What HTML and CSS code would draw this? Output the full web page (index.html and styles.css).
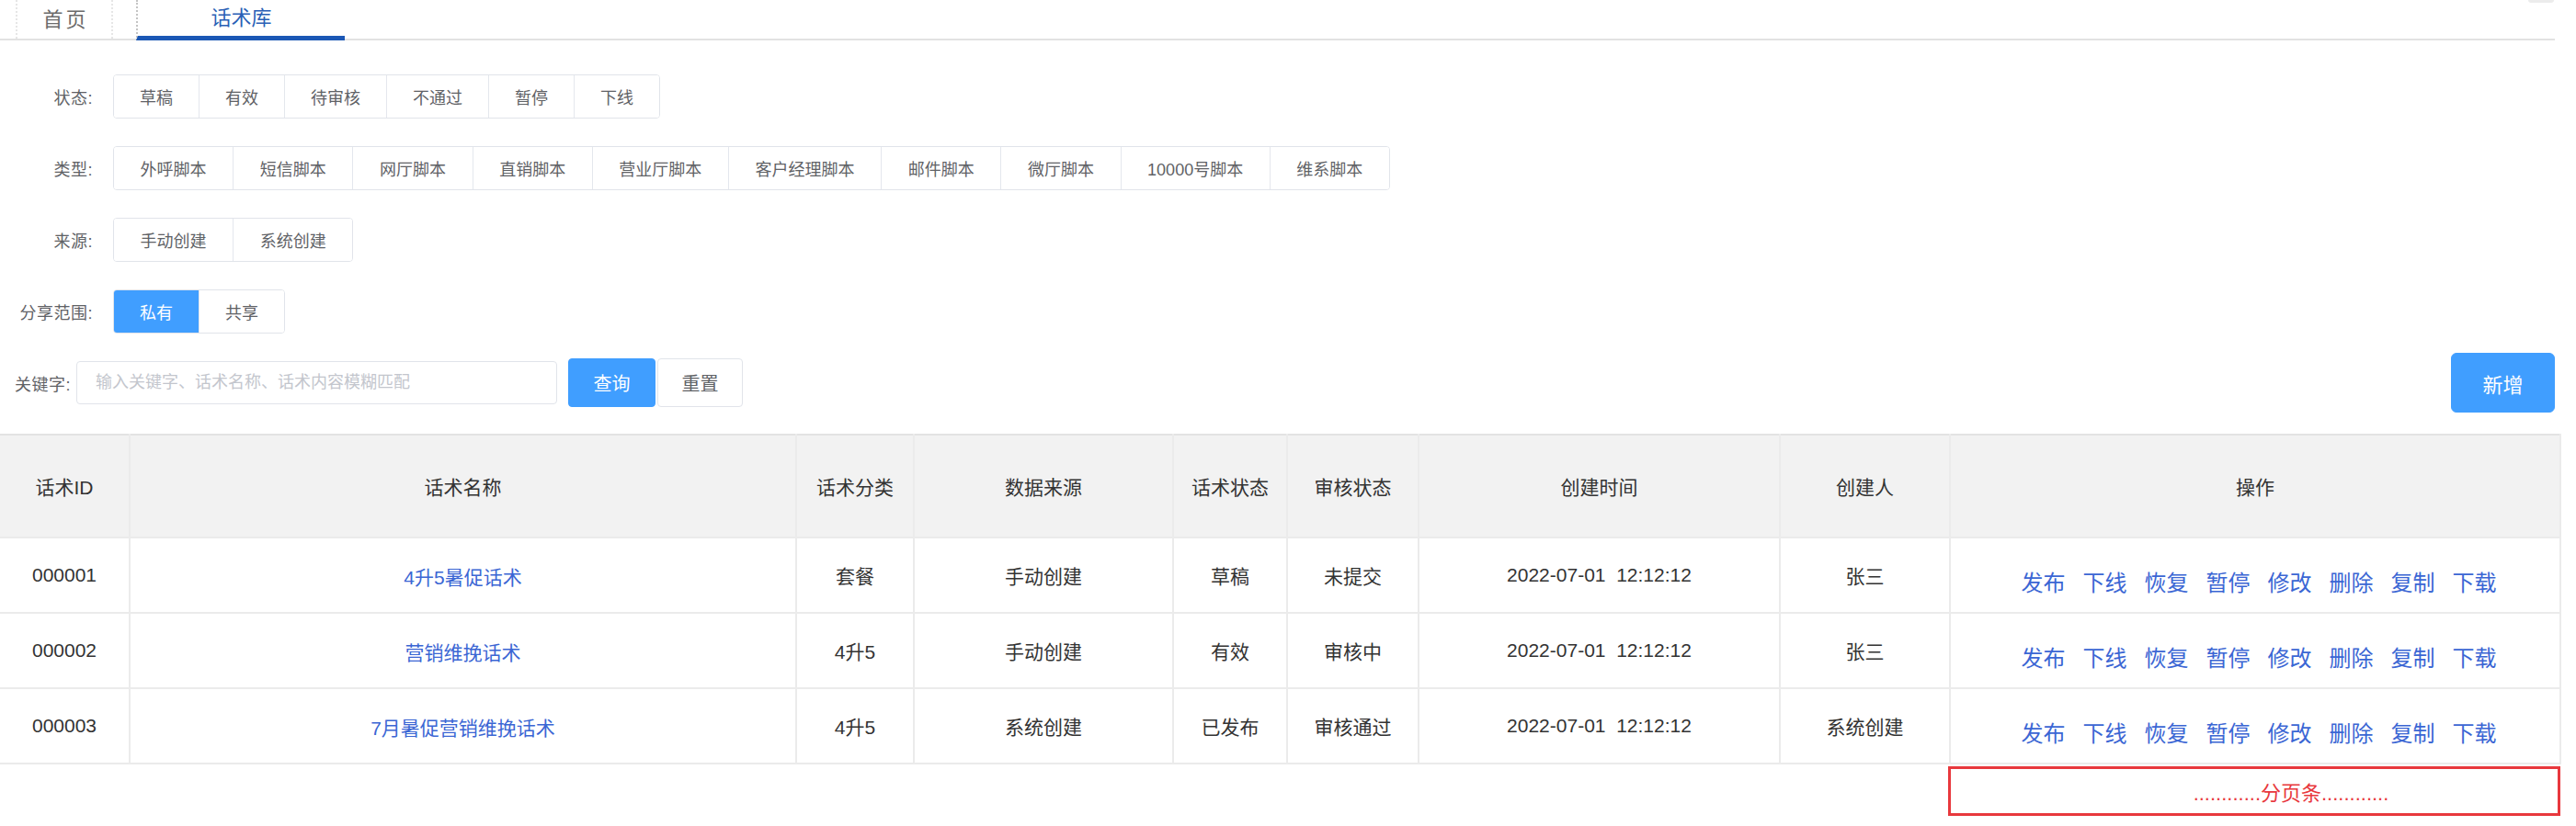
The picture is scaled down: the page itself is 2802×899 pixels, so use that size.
FILE: index.html
```html
<!DOCTYPE html>
<html lang="zh-CN">
<head>
<meta charset="utf-8">
<title>话术库</title>
<link rel="stylesheet" href="styles.css">
</head>
<body>
<div class="corner-mark"></div>
<nav class="tabs">
  <a class="tab tab-home">首页</a>
  <a class="tab tab-active">话术库</a>
</nav>

<section class="filters">
  <div class="frow">
    <span class="flabel">状态:</span>
    <div class="seg">
      <button class="seg-btn">草稿</button><button class="seg-btn">有效</button><button class="seg-btn">待审核</button><button class="seg-btn">不通过</button><button class="seg-btn">暂停</button><button class="seg-btn">下线</button>
    </div>
  </div>
  <div class="frow">
    <span class="flabel">类型:</span>
    <div class="seg seg-wide">
      <button class="seg-btn">外呼脚本</button><button class="seg-btn">短信脚本</button><button class="seg-btn">网厅脚本</button><button class="seg-btn">直销脚本</button><button class="seg-btn">营业厅脚本</button><button class="seg-btn">客户经理脚本</button><button class="seg-btn">邮件脚本</button><button class="seg-btn">微厅脚本</button><button class="seg-btn">10000号脚本</button><button class="seg-btn">维系脚本</button>
    </div>
  </div>
  <div class="frow">
    <span class="flabel">来源:</span>
    <div class="seg seg-wide">
      <button class="seg-btn">手动创建</button><button class="seg-btn">系统创建</button>
    </div>
  </div>
  <div class="frow">
    <span class="flabel">分享范围:</span>
    <div class="seg">
      <button class="seg-btn seg-on">私有</button><button class="seg-btn">共享</button>
    </div>
  </div>
  <div class="krow">
    <div class="kleft">
      <span class="klabel">关键字:</span>
      <input class="kinput" type="text" placeholder="输入关键字、话术名称、话术内容模糊匹配">
      <button class="btn btn-primary btn-query">查询</button><button class="btn btn-plain">重置</button>
    </div>
    <button class="btn btn-primary btn-add">新增</button>
  </div>
</section>

<table class="grid">
  <colgroup>
    <col style="width:141px"><col style="width:725px"><col style="width:128px"><col style="width:282px"><col style="width:124px"><col style="width:143px"><col style="width:393px"><col style="width:185px"><col style="width:664px">
  </colgroup>
  <thead>
    <tr><th>话术ID</th><th>话术名称</th><th>话术分类</th><th>数据来源</th><th>话术状态</th><th>审核状态</th><th>创建时间</th><th>创建人</th><th>操作</th></tr>
  </thead>
  <tbody>
    <tr>
      <td>000001</td><td class="name"><a>4升5暑促话术</a></td><td>套餐</td><td>手动创建</td><td>草稿</td><td>未提交</td><td>2022-07-01&nbsp;&nbsp;12:12:12</td><td>张三</td>
      <td class="ops"><a>发布</a><a>下线</a><a>恢复</a><a>暂停</a><a>修改</a><a>删除</a><a>复制</a><a>下载</a></td>
    </tr>
    <tr>
      <td>000002</td><td class="name"><a>营销维挽话术</a></td><td>4升5</td><td>手动创建</td><td>有效</td><td>审核中</td><td>2022-07-01&nbsp;&nbsp;12:12:12</td><td>张三</td>
      <td class="ops"><a>发布</a><a>下线</a><a>恢复</a><a>暂停</a><a>修改</a><a>删除</a><a>复制</a><a>下载</a></td>
    </tr>
    <tr>
      <td>000003</td><td class="name"><a>7月暑促营销维挽话术</a></td><td>4升5</td><td>系统创建</td><td>已发布</td><td>审核通过</td><td>2022-07-01&nbsp;&nbsp;12:12:12</td><td>系统创建</td>
      <td class="ops"><a>发布</a><a>下线</a><a>恢复</a><a>暂停</a><a>修改</a><a>删除</a><a>复制</a><a>下载</a></td>
    </tr>
  </tbody>
</table>

<div class="pager-row">
  <div class="pager">............分页条............</div>
</div>
</body>
</html>
```

FILE: styles.css
```css
* { box-sizing: border-box; }

html, body {
  margin: 0;
  padding: 0;
  background: #ffffff;
}

body {
  font-family: "Liberation Sans", "Noto Sans CJK SC", sans-serif;
  color: #333333;
  position: relative;
}

.corner-mark {
  position: absolute;
  top: 0;
  right: 24px;
  width: 28px;
  height: 3px;
  background: #ececec;
  border-radius: 0 0 3px 3px;
}

/* tabs */
.tabs {
  display: flex;
  height: 44px;
  border-bottom: 2px solid #e2e2e2;
  margin-right: 23px;
  padding-left: 17px;
}

.tab {
  display: flex;
  align-items: center;
  justify-content: center;
  font-size: 22px;
  padding-bottom: 5px;
  text-decoration: none;
  cursor: pointer;
}

.tab-home {
  width: 106px;
  color: #6b6b6b;
  border-left: 2px dotted #e6e6e6;
  border-right: 2px dotted #e6e6e6;
  letter-spacing: 3px;
  padding-left: 3px;
}

.tab-active {
  width: 227px;
  margin-left: 25px;
  color: #2a5fb6;
  border-left: 2px dotted #c4c4c4;
  border-bottom: 5px solid #1b57b5;
  margin-bottom: -2px;
}

/* filters */
.filters {
  padding-top: 37px;
}

.frow {
  display: flex;
  align-items: center;
  height: 48px;
  margin-bottom: 30px;
}

.flabel {
  width: 101px;
  margin-right: 22px;
  text-align: right;
  font-size: 18px;
  color: #5f6266;
  letter-spacing: 0.5px;
}

.seg {
  display: flex;
  height: 48px;
  border: 1px solid #e1e4ea;
  border-radius: 4px;
  overflow: hidden;
}

.seg-btn {
  height: 100%;
  padding: 0 28px;
  border: none;
  border-left: 1px solid #e4e7ed;
  background: #ffffff;
  font-family: inherit;
  font-size: 18px;
  color: #5f6266;
  cursor: pointer;
}

.seg-wide .seg-btn {
  padding: 0 28.6px;
}

.seg-btn:first-child {
  border-left: none;
}

.seg-btn.seg-on {
  background: #409eff;
  color: #ffffff;
}

/* keyword row */
.krow {
  display: flex;
  align-items: center;
  justify-content: space-between;
  margin-top: -9px;
  padding-left: 16px;
  padding-right: 23px;
}

.kleft {
  display: flex;
  align-items: center;
}

.klabel {
  font-size: 18px;
  color: #5f6266;
  margin-right: 6px;
  letter-spacing: 0.5px;
}

.kinput {
  width: 523px;
  height: 47px;
  border: 1px solid #e1e4ea;
  border-radius: 4px;
  padding: 0 20px;
  font-family: inherit;
  font-size: 18px;
  color: #606266;
  outline: none;
}

.kinput::placeholder {
  color: #c3c6cd;
}

.btn {
  font-family: inherit;
  border-radius: 4px;
  cursor: pointer;
}

.btn-primary {
  background: #409eff;
  border: 1px solid #409eff;
  color: #ffffff;
}

.btn-query {
  margin-left: 12px;
  width: 95px;
  height: 53px;
  font-size: 20px;
}

.btn-plain {
  margin-left: 2px;
  width: 93px;
  height: 53px;
  font-size: 20px;
  background: #ffffff;
  border: 1px solid #e1e4ea;
  color: #5f6266;
}

.btn-add {
  width: 113px;
  height: 65px;
  font-size: 22px;
  border-radius: 6px;
}

/* table */
.grid {
  margin-top: 23px;
  width: 2785px;
  border-collapse: collapse;
  table-layout: fixed;
  font-size: 21px;
  color: #333333;
}

.grid th,
.grid td {
  border: 2px solid #ebebeb;
  text-align: center;
  vertical-align: middle;
  padding: 0;
}

.grid th:first-child,
.grid td:first-child {
  border-left: none;
}

.grid th {
  height: 112px;
  background: #f2f2f2;
  font-weight: normal;
  border-top: 2px solid #e3e3e3;
}

.grid td {
  height: 82px;
}

.grid a {
  color: #3b66d4;
  text-decoration: none;
  cursor: pointer;
}

.grid td.name {
  padding-top: 2px;
}

.grid td.ops {
  padding-top: 12px;
  padding-left: 8px;
  font-size: 24px;
}

.grid td.ops a {
  margin: 0 9.5px;
}

/* pager */
.pager-row {
  display: flex;
  justify-content: flex-end;
  width: 2785px;
  margin-top: 2px;
}

.pager {
  width: 666px;
  height: 54px;
  border: 3px solid #e8383d;
  display: flex;
  align-items: center;
  justify-content: center;
  padding-left: 80px;
  color: #e8383d;
  font-size: 22px;
}
```
